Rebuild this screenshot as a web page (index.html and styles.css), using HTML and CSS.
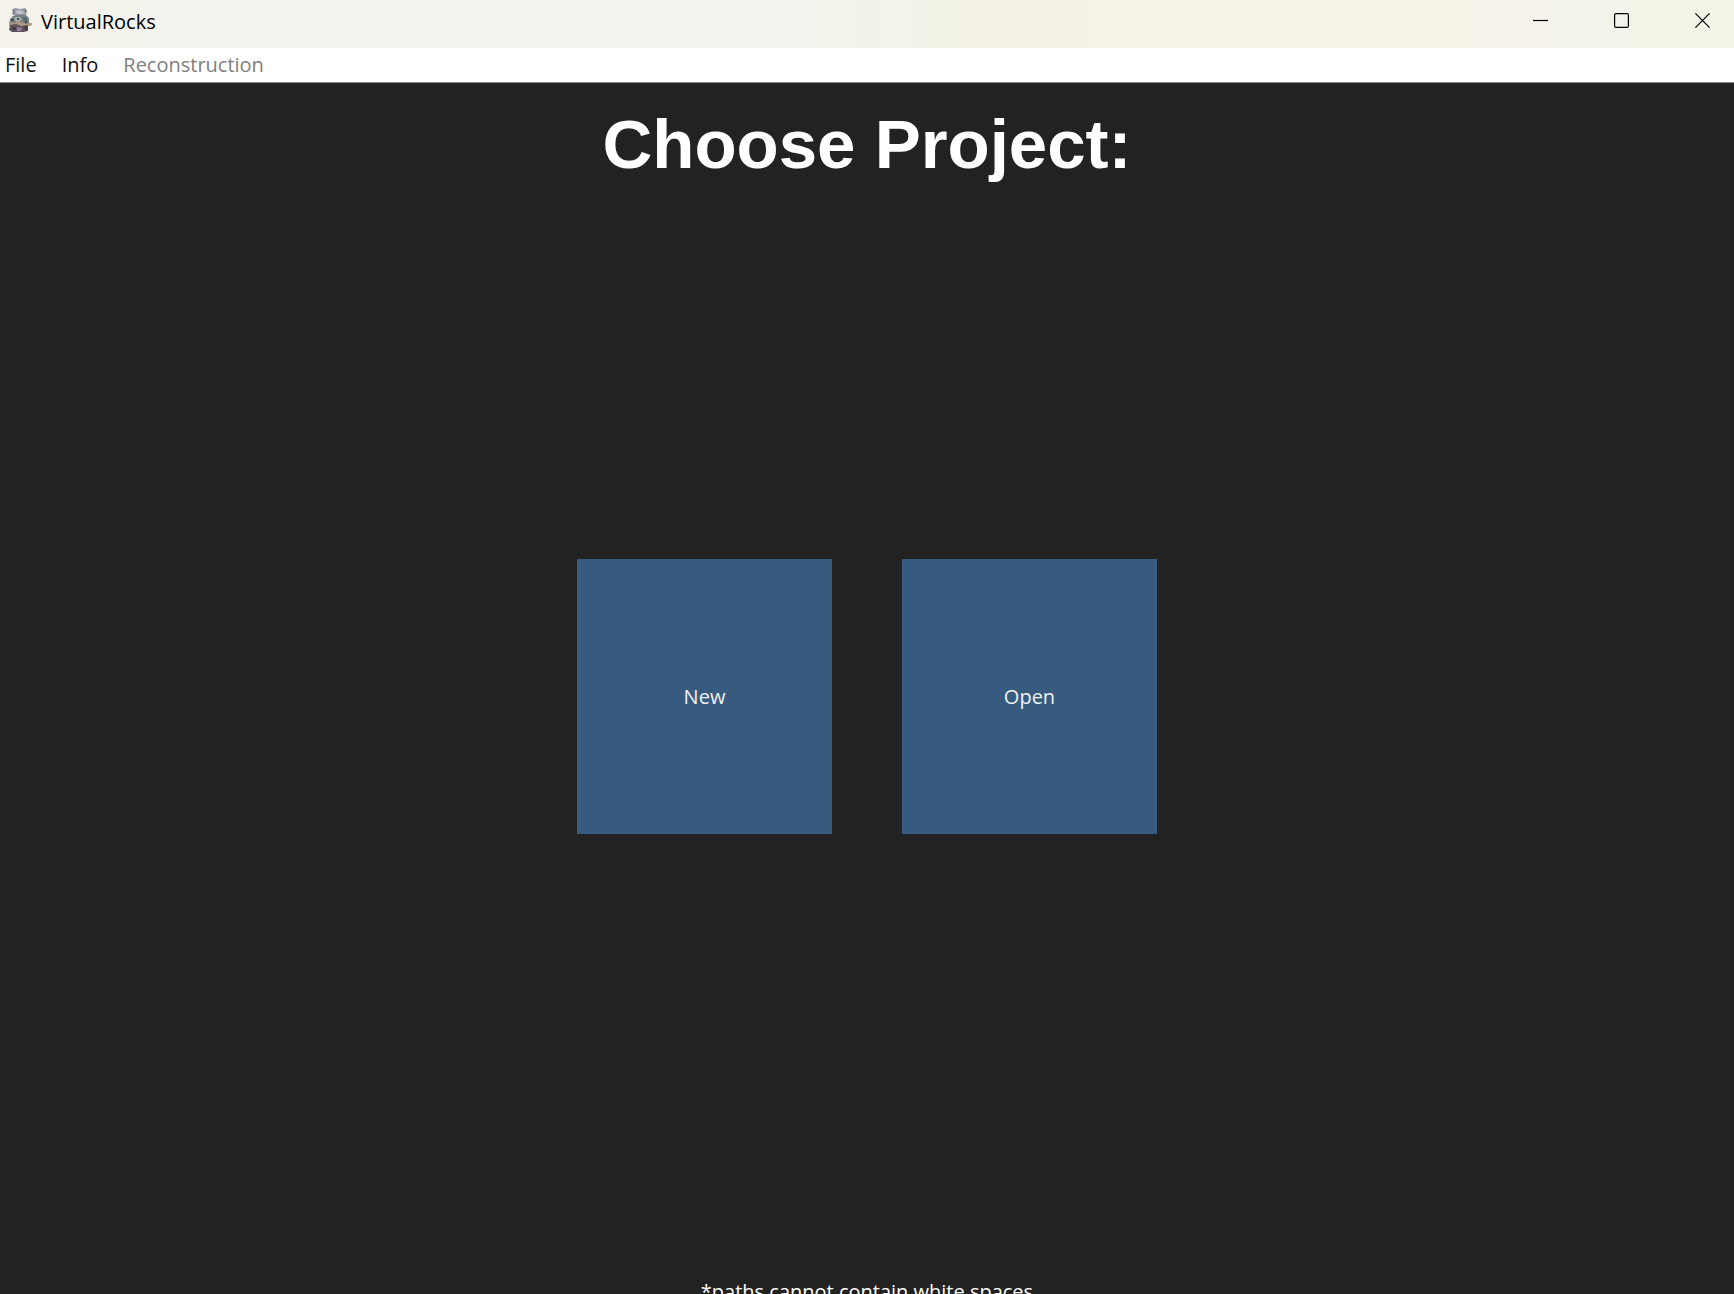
FILE: index.html
```html
<!DOCTYPE html>
<html lang="en">
<head>
  <meta charset="utf-8">
  <title>VirtualRocks</title>
  <link rel="stylesheet" href="styles.css">
</head>
<body>
  <div class="window">
    <header class="titlebar">
      <svg class="app-icon" viewBox="0 0 24 24" aria-hidden="true">
        <path d="M5 1l2-1 5 1 5-1 2 3-1 4-4 2H8L4 6z" fill="#969aa2"/>
        <path d="M8 3l4-1 4 2-2 3H9z" fill="#c0c2ca"/>
        <path d="M5 1l1 4M17 1l1 3M8 7h7" stroke="#666a70" fill="none"/>
        <path d="M5 8l13-1 3 3v5l3 1-2 2H1l1-7z" fill="#77817f"/>
        <path d="M7 9h5l2 3-5 2-3-2z" fill="#a2b0ad"/>
        <path d="M15 9l4 1v3l-4-1z" fill="#596669"/>
        <path d="M1 14l6 1 4-2 6 3 7-1v2l-7 2-7-2-9 1z" fill="#b19983"/>
        <path d="M2 17l6-1 5 2 7-1v6l-4 1H4l-3-2z" fill="#605361"/>
        <path d="M4 19h4v3H4zM16 18h4v4h-3z" fill="#453c40"/>
        <path d="M9 19l5 1-1 3H9z" fill="#9b8199"/>
        <path d="M3 12h3M9 11h2M17 14h2" stroke="#484c4d" stroke-width="2"/>
      </svg>
      <span class="app-name">VirtualRocks</span>
      <div class="window-controls">
        <button class="window-button" type="button" aria-label="Minimize">
          <svg class="control-icon" viewBox="0 0 15 15"><path d="M0 7.5h15"/></svg>
        </button>
        <button class="window-button" type="button" aria-label="Maximize">
          <svg class="control-icon" viewBox="0 0 15 15"><rect x=".6" y=".6" width="13.8" height="13.8" rx="1.5"/></svg>
        </button>
        <button class="window-button" type="button" aria-label="Close">
          <svg class="control-icon" viewBox="0 0 15 15"><path d="M.4.4l14.2 14.2M14.6.4L.4 14.6"/></svg>
        </button>
      </div>
    </header>
    <nav class="menubar" aria-label="Application menu">
      <button class="menu-item" type="button">File</button>
      <button class="menu-item" type="button">Info</button>
      <button class="menu-item" type="button" disabled>Reconstruction</button>
    </nav>
    <main class="chooser">
      <h1 class="heading">Choose Project:</h1>
      <div class="choices">
        <button class="choice" type="button">New</button>
        <button class="choice" type="button">Open</button>
      </div>
      <p class="note">*paths cannot contain white spaces</p>
    </main>
  </div>
</body>
</html>
```
FILE: styles.css
```css
* {
  box-sizing: border-box;
}

body {
  margin: 0;
  overflow: hidden;
  background: #222;
  font: 20px/28px "Open Sans", sans-serif;
}

button {
  margin: 0;
  border: 0;
  font: inherit;
}

.window {
  display: flex;
  flex-direction: column;
  height: calc(100vh + 16px);
}

.titlebar {
  display: flex;
  flex: none;
  align-items: center;
  height: 48px;
  padding-left: 8px;
  background: linear-gradient(90deg, #f5f3eb, #f3f2ed 15%, #f3f2ed 45%, #f4f2e5 58%, #f6f2e7 80%, #f5f2ea 88%, #f3f3ea 92%, #f3f3e6);
  color: #000;
}

.app-icon {
  width: 24px;
  height: 24px;
  margin: 0 9px 8px 0;
}

.app-name {
  padding-bottom: 4px;
}

.window-controls {
  display: flex;
  margin-left: auto;
}

.window-button {
  display: grid;
  place-items: center;
  width: 81px;
  height: 48px;
  padding: 0 0 7px 18px;
  background: transparent;
}

.control-icon {
  width: 15px;
  height: 15px;
  fill: none;
  stroke: #000;
  stroke-width: 1.2;
}

.menubar {
  display: flex;
  flex: none;
  gap: 25px;
  height: 35px;
  padding: 2px 5px 0;
  border-bottom: 1px solid #8a8a8a;
  background: #fff;
}

.menu-item {
  height: 30px;
  padding: 0;
  background: transparent;
  color: #111;
}

.menu-item:disabled {
  color: #808080;
}

.chooser {
  display: grid;
  flex: 1;
  grid-template-rows: 1fr auto 1fr;
  justify-items: center;
  color: #fff;
}

.heading {
  margin: 0;
  padding-top: 22px;
  font: bold 69px/80px "Liberation Sans", Arial, sans-serif;
}

.choices {
  display: flex;
  gap: 70px;
}

.choice {
  width: 255px;
  height: 275px;
  background: #375a7f;
  color: #f0f0f0;
}

.note {
  align-self: end;
  margin: 0;
  padding-bottom: 4px;
}
```
